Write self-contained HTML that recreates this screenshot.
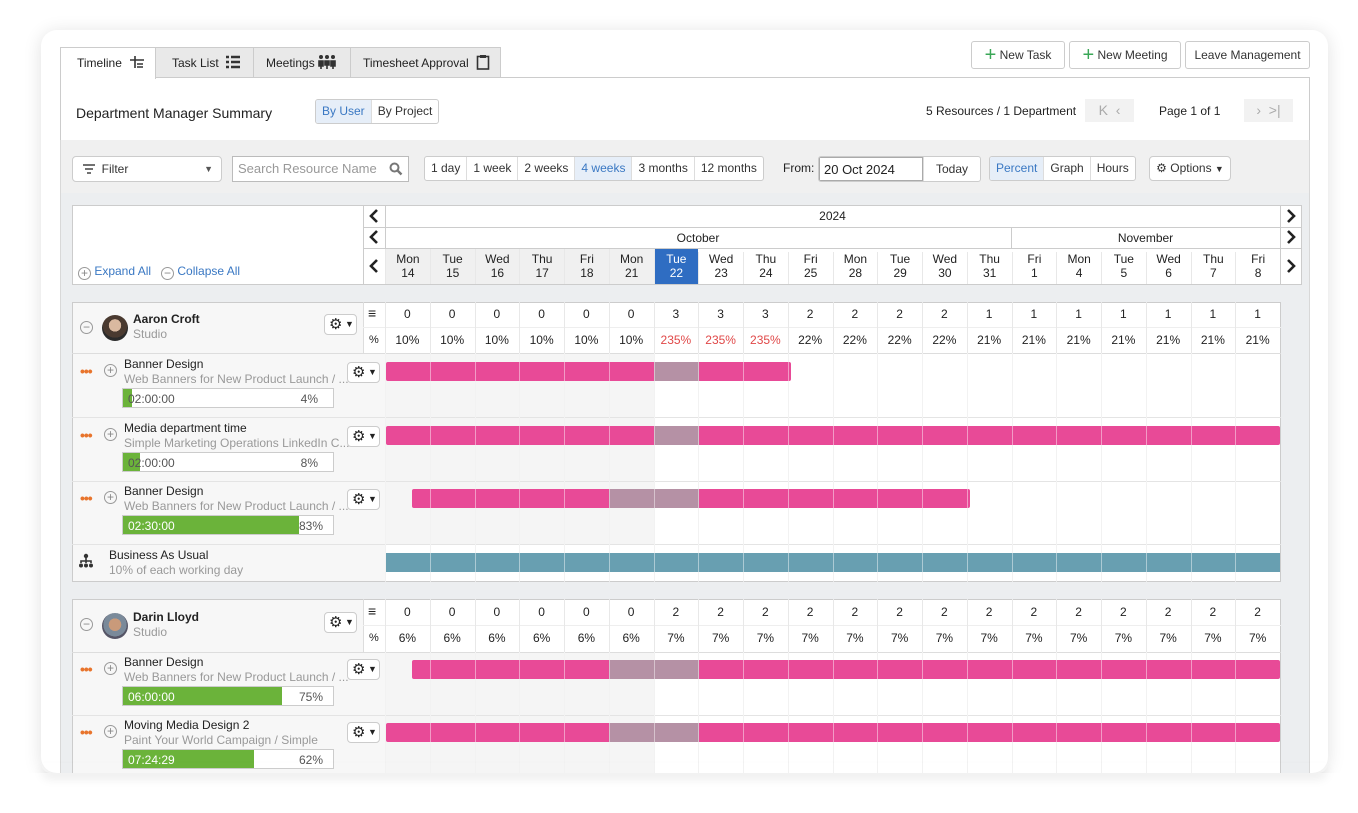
<!DOCTYPE html>
<html><head><meta charset="utf-8"><style>
*{box-sizing:border-box;margin:0;padding:0}
body{width:1358px;height:813px;background:#fff;font-family:"Liberation Sans",Arial,sans-serif;font-size:12px;color:#222;position:relative;overflow:hidden}
.a{position:absolute}
.card{left:41px;top:30px;width:1287px;height:743px;background:#fff;border-radius:16px;box-shadow:0 2px 18px rgba(0,0,0,.12);overflow:hidden}
.tab{top:47px;height:31px;background:#e9e9e9;border:1px solid #ccc;border-bottom:none;font-size:12px;line-height:30px;padding-left:16px}
.btn{border:1px solid #ccc;border-radius:3px;background:#fff;font-size:12px;text-align:center;color:#333}
.seg{display:flex;border:1px solid #ccc;border-radius:3px;background:#fff;overflow:hidden}
.seg div{border-left:1px solid #ddd;padding:0 6px;line-height:23px;font-size:12px;color:#333}
.seg div:first-child{border-left:none}
.seg .on{background:#e6eef8;color:#3a78c3}
.row{position:absolute;left:385px;width:895px;display:flex}
.row div{width:44.75px;flex:none;border-left:1px solid #e8e8e8;text-align:center}
.blue{color:#3a78c3}
.gear{border:1px solid #ccc;border-radius:4px;background:#fff;width:33px;height:21px}
.pk{background:#e84a97;height:19px;border-radius:2px}
.gy{background:#b591a5;height:19px}
.sub{color:#999;font-size:12px}
.dots{color:#e8742c;font-size:14px;letter-spacing:-1px;font-weight:bold}
.circ{width:13px;height:13px;border:1px solid #999;border-radius:50%;font-size:12px;line-height:10px;text-align:center;color:#888}
.prog{border:1px solid #ccc;background:#fff;height:20px;width:212px}
.prog .f{position:absolute;left:0;top:0;bottom:0;background:#6bb33a}
.chev{position:absolute}
</style></head><body>
<div class="a card"></div>

<div class="a tab" style="left:60px;width:96px;background:#fff;z-index:2;height:32px">Timeline <svg width="16" height="14" style="vertical-align:-2px;margin-left:4px"><path d="M6 1v12M1 5h14M8 9h6M8 12h6" stroke="#333" stroke-width="1.6" fill="none"/></svg></div>
<div class="a tab" style="left:155px;width:99px">Task List <svg width="16" height="14" style="vertical-align:-2px;margin-left:3px"><path d="M1 2h3M6 2h9M1 7h3M6 7h9M1 12h3M6 12h9" stroke="#333" stroke-width="2.4" fill="none"/></svg></div>
<div class="a tab" style="left:253px;width:98px;padding-left:12px">Meetings <svg width="18" height="16" style="vertical-align:-3px"><circle cx="3" cy="3" r="2" fill="#333"/><circle cx="9" cy="3" r="2" fill="#333"/><circle cx="15" cy="3" r="2" fill="#333"/><path d="M1 7h4v5h-4zM7 7h4v4h-4zM13 7h4v5h-4zM3 12v3M9 11v4M15 12v3" stroke="#333" stroke-width="1.6" fill="#333"/></svg></div>
<div class="a tab" style="left:350px;width:151px;padding-left:12px">Timesheet Approval <svg width="14" height="16" style="vertical-align:-3px;margin-left:4px"><rect x="1.5" y="2.5" width="11" height="12.5" fill="none" stroke="#333" stroke-width="1.6"/><rect x="4" y="1" width="6" height="3" fill="#333"/></svg></div>

<div class="a btn" style="left:971px;top:41px;width:94px;height:28px;line-height:26px"><span style="color:#3aa757;font-size:20px;vertical-align:-2px">+</span> New Task</div>
<div class="a btn" style="left:1069px;top:41px;width:112px;height:28px;line-height:26px"><span style="color:#3aa757;font-size:20px;vertical-align:-2px">+</span> New Meeting</div>
<div class="a btn" style="left:1185px;top:41px;width:125px;height:28px;line-height:26px">Leave Management</div>

<div class="a" style="left:60px;top:77px;width:1250px;height:64px;border:1px solid #ccc;background:#fff"></div>
<div class="a" style="left:76px;top:105px;font-size:14px">Department Manager Summary</div>
<div class="a seg" style="left:315px;top:99px;height:25px"><div class="on">By User</div><div>By Project</div></div>
<div class="a" style="left:926px;top:104px;font-size:12px">5 Resources / 1 Department</div>
<div class="a" style="left:1085px;top:99px;width:49px;height:23px;background:#f2f2f2;color:#aaa;font-size:14px;line-height:22px;text-align:center">K&nbsp;&nbsp;‹</div>
<div class="a" style="left:1159px;top:104px">Page 1 of 1</div>
<div class="a" style="left:1244px;top:99px;width:49px;height:23px;background:#f2f2f2;color:#aaa;font-size:14px;line-height:22px;text-align:center">›&nbsp;&nbsp;&gt;|</div>

<div class="a" style="left:60px;top:140px;width:1250px;height:54px;background:#f0f0f0;border:1px solid #d8d8d8;border-top:none"></div>
<div class="a btn" style="left:72px;top:156px;width:150px;height:26px;text-align:left;line-height:24px;padding-left:10px;border-radius:4px"><svg width="12" height="10" style="vertical-align:-1px"><path d="M0 1h12M2 5h8M4 9h4" stroke="#444" stroke-width="1.4"/></svg>&nbsp;&nbsp;Filter<span class="a" style="right:8px;top:0;font-size:9px;color:#555">▼</span></div>
<div class="a" style="left:232px;top:156px;width:177px;height:26px;background:#fff;border:1px solid #bbb;color:#999;font-size:13px;line-height:24px;padding-left:5px">Search Resource Name<svg class="a" style="right:5px;top:5px" width="14" height="14"><circle cx="5.5" cy="5.5" r="4" fill="none" stroke="#777" stroke-width="2"/><path d="M8.5 8.5l4 4" stroke="#777" stroke-width="2.4"/></svg></div>
<div class="a seg" style="left:424px;top:156px;height:25px"><div>1 day</div><div>1 week</div><div>2 weeks</div><div class="on">4 weeks</div><div>3 months</div><div>12 months</div></div>
<div class="a" style="left:783px;top:161px">From:</div>
<div class="a seg" style="left:818px;top:156px;height:26px"><div style="width:104px;border:1px solid #aaa;color:#222;font-size:13px;padding-left:4px;line-height:24px">20 Oct 2024</div><div class="blue" style="padding:0 12px;line-height:24px">Today</div></div>
<div class="a seg" style="left:989px;top:156px;height:25px"><div class="on">Percent</div><div>Graph</div><div>Hours</div></div>
<div class="a btn" style="left:1149px;top:156px;width:82px;height:25px;line-height:23px;border-radius:4px">⚙ Options <span style="font-size:9px">▼</span></div>

<div class="a" style="left:60px;top:193px;width:1250px;height:580px;background:#eceef0;border-left:1px solid #d8d8d8;border-right:1px solid #d8d8d8"></div>

<div class="a" style="left:72px;top:205px;width:1230px;height:80px;background:#fff;border:1px solid #ccc"></div>
<div class="a" style="left:363px;top:205px;width:1px;height:80px;background:#ccc"></div>
<div class="a" style="left:385px;top:205px;width:1px;height:80px;background:#ccc"></div>
<div class="a" style="left:1280px;top:205px;width:1px;height:80px;background:#ccc"></div>
<div class="a" style="left:385px;top:227px;width:917px;height:1px;background:#ccc"></div>
<div class="a" style="left:363px;top:227px;width:22px;height:1px;background:#ccc"></div>
<div class="a" style="left:363px;top:248px;width:939px;height:1px;background:#ccc"></div>
<div class="a" style="left:385px;top:209px;width:895px;text-align:center">2024</div>
<div class="a" style="left:385px;top:231px;width:626px;text-align:center">October</div>
<div class="a" style="left:1011px;top:227px;width:1px;height:21px;background:#ccc"></div>
<div class="a" style="left:1011px;top:231px;width:269px;text-align:center">November</div>
<svg class="chev" style="left:368px;top:208px" width="12" height="16"><path d="M9 2L3 8l6 6" stroke="#222" stroke-width="2.6" fill="none"/></svg>
<svg class="chev" style="left:368px;top:229px" width="12" height="16"><path d="M9 2L3 8l6 6" stroke="#222" stroke-width="2.6" fill="none"/></svg>
<svg class="chev" style="left:368px;top:258px" width="12" height="16"><path d="M9 2L3 8l6 6" stroke="#222" stroke-width="2.6" fill="none"/></svg>
<svg class="chev" style="left:1285px;top:208px" width="12" height="16"><path d="M3 2l6 6-6 6" stroke="#222" stroke-width="2.6" fill="none"/></svg>
<svg class="chev" style="left:1285px;top:229px" width="12" height="16"><path d="M3 2l6 6-6 6" stroke="#222" stroke-width="2.6" fill="none"/></svg>
<svg class="chev" style="left:1285px;top:258px" width="12" height="16"><path d="M3 2l6 6-6 6" stroke="#222" stroke-width="2.6" fill="none"/></svg>
<div class="row" style="top:249px;height:35px;line-height:14px;padding-top:3px;font-size:12px">
<div style="background:#f0f0f0;margin-top:-3px;padding-top:3px">Mon<br>14</div><div style="background:#f0f0f0;margin-top:-3px;padding-top:3px">Tue<br>15</div><div style="background:#f0f0f0;margin-top:-3px;padding-top:3px">Wed<br>16</div><div style="background:#f0f0f0;margin-top:-3px;padding-top:3px">Thu<br>17</div><div style="background:#f0f0f0;margin-top:-3px;padding-top:3px">Fri<br>18</div><div style="background:#f0f0f0;margin-top:-3px;padding-top:3px">Mon<br>21</div><div style="background:#2f6dc2;color:#fff;margin-top:-3px;padding-top:3px">Tue<br>22</div><div>Wed<br>23</div><div>Thu<br>24</div><div>Fri<br>25</div><div>Mon<br>28</div><div>Tue<br>29</div><div>Wed<br>30</div><div>Thu<br>31</div><div>Fri<br>1</div><div>Mon<br>4</div><div>Tue<br>5</div><div>Wed<br>6</div><div>Thu<br>7</div><div>Fri<br>8</div></div>
<div class="a" style="left:78px;top:264px;color:#3a78c3"><span class="circ" style="display:inline-block;vertical-align:-2px">+</span> Expand All &nbsp; <span class="circ" style="display:inline-block;vertical-align:-2px">−</span> Collapse All</div>

<div class="a" style="left:72px;top:302px;width:1209px;height:280px;background:#fff;border:1px solid #ccc"></div>
<div class="a" style="left:385px;top:353px;width:269px;height:191px;background:#f5f5f5"></div>
<div class="a" style="left:73px;top:303px;width:290px;height:50px;background:#f7f7f7"></div>
<div class="a" style="left:73px;top:353px;width:312px;height:228px;background:#f7f7f7"></div>
<div class="a" style="left:363px;top:302px;width:1px;height:52px;background:#ddd"></div>
<div class="a" style="left:385px;top:302px;width:1px;height:280px;background:#ddd"></div>
<div class="a" style="left:363px;top:327px;width:918px;height:1px;background:#eee"></div>
<div class="a" style="left:72px;top:353px;width:1209px;height:1px;background:#ddd"></div>
<div class="a" style="left:72px;top:417px;width:1209px;height:1px;background:#e4e4e4"></div>
<div class="a" style="left:72px;top:481px;width:1209px;height:1px;background:#e4e4e4"></div>
<div class="a" style="left:72px;top:544px;width:1209px;height:1px;background:#e4e4e4"></div>
<div class="row" style="top:302px;height:280px"><div></div><div></div><div></div><div></div><div></div><div></div><div></div><div></div><div></div><div></div><div></div><div></div><div></div><div></div><div></div><div></div><div></div><div></div><div></div><div></div></div>
<div class="row" style="top:307px;font-size:12px"><div style="border:none">0</div><div style="border:none">0</div><div style="border:none">0</div><div style="border:none">0</div><div style="border:none">0</div><div style="border:none">0</div><div style="border:none">3</div><div style="border:none">3</div><div style="border:none">3</div><div style="border:none">2</div><div style="border:none">2</div><div style="border:none">2</div><div style="border:none">2</div><div style="border:none">1</div><div style="border:none">1</div><div style="border:none">1</div><div style="border:none">1</div><div style="border:none">1</div><div style="border:none">1</div><div style="border:none">1</div></div>
<div class="row" style="top:333px;font-size:12px"><div style="border:none">10%</div><div style="border:none">10%</div><div style="border:none">10%</div><div style="border:none">10%</div><div style="border:none">10%</div><div style="border:none">10%</div><div style="border:none;color:#e04848">235%</div><div style="border:none;color:#e04848">235%</div><div style="border:none;color:#e04848">235%</div><div style="border:none">22%</div><div style="border:none">22%</div><div style="border:none">22%</div><div style="border:none">22%</div><div style="border:none">21%</div><div style="border:none">21%</div><div style="border:none">21%</div><div style="border:none">21%</div><div style="border:none">21%</div><div style="border:none">21%</div><div style="border:none">21%</div></div>
<div class="a" style="left:368px;top:305px;font-size:14px;font-weight:bold">≡</div>
<div class="a" style="left:369px;top:334px;font-size:11px">%</div>
<div class="a circ" style="left:80px;top:321px">−</div>
<div class="a" style="left:102px;top:315px;width:26px;height:26px;border-radius:50%;background:radial-gradient(circle at 50% 40%,#d9b9a0 0 30%,#4a3a30 31% 60%,#2a2a2a 61%)"></div>
<div class="a" style="left:133px;top:312px;font-weight:bold;font-size:12px">Aaron Croft</div>
<div class="a sub" style="left:133px;top:327px">Studio</div>
<div class="a gear" style="left:324px;top:314px;font-size:15px;line-height:19px;padding-left:4px">⚙<span style="font-size:9px;vertical-align:2px"> ▼</span></div>

<div class="a dots" style="left:80px;top:363px">•••</div><div class="a circ" style="left:104px;top:364px">+</div>
<div class="a" style="left:124px;top:357px">Banner Design</div><div class="a sub" style="left:124px;top:372px">Web Banners for New Product Launch / ...</div>
<div class="a gear" style="left:347px;top:362px;font-size:15px;line-height:19px;padding-left:4px">⚙<span style="font-size:9px;vertical-align:2px"> ▼</span></div>
<div class="a prog" style="left:122px;top:388px"><div class="f" style="width:9px"></div><span class="a" style="left:5px;top:3px;color:#555">02:00:00</span><span class="a" style="right:15px;top:3px;color:#555">4%</span></div>

<div class="a dots" style="left:80px;top:427px">•••</div><div class="a circ" style="left:104px;top:428px">+</div>
<div class="a" style="left:124px;top:421px">Media department time</div><div class="a sub" style="left:124px;top:436px">Simple Marketing Operations LinkedIn C...</div>
<div class="a gear" style="left:347px;top:426px;font-size:15px;line-height:19px;padding-left:4px">⚙<span style="font-size:9px;vertical-align:2px"> ▼</span></div>
<div class="a prog" style="left:122px;top:452px"><div class="f" style="width:17px"></div><span class="a" style="left:5px;top:3px;color:#555">02:00:00</span><span class="a" style="right:15px;top:3px;color:#555">8%</span></div>

<div class="a dots" style="left:80px;top:490px">•••</div><div class="a circ" style="left:104px;top:491px">+</div>
<div class="a" style="left:124px;top:484px">Banner Design</div><div class="a sub" style="left:124px;top:499px">Web Banners for New Product Launch / ...</div>
<div class="a gear" style="left:347px;top:489px;font-size:15px;line-height:19px;padding-left:4px">⚙<span style="font-size:9px;vertical-align:2px"> ▼</span></div>
<div class="a prog" style="left:122px;top:515px"><div class="f" style="width:176px"></div><span class="a" style="left:5px;top:3px;color:#fff">02:30:00</span><span class="a" style="right:10px;top:3px;color:#555">83%</span></div>

<svg class="a" style="left:78px;top:553px" width="16" height="16"><circle cx="8" cy="3" r="2.2" fill="#333"/><path d="M8 5v5M3 10v-2h10v2" stroke="#333" stroke-width="1.6" fill="none"/><circle cx="3" cy="12.5" r="2" fill="#333"/><circle cx="8" cy="12.5" r="2" fill="#333"/><circle cx="13" cy="12.5" r="2" fill="#333"/></svg>
<div class="a" style="left:109px;top:548px">Business As Usual</div><div class="a sub" style="left:109px;top:563px">10% of each working day</div>

<div class="a pk" style="left:386px;top:362px;width:405px"></div>
<div class="a gy" style="left:654px;top:362px;width:45px"></div>
<div class="a pk" style="left:386px;top:426px;width:894px"></div>
<div class="a gy" style="left:654px;top:426px;width:45px"></div>
<div class="a pk" style="left:412px;top:489px;width:558px"></div>
<div class="a gy" style="left:609px;top:489px;width:90px"></div>
<div class="a" style="left:386px;top:553px;width:894px;height:19px;background:#689fb1"></div>
<div class="row" style="top:353px;height:228px;pointer-events:none"><div style="border-color:rgba(255,255,255,.45)"></div><div style="border-color:rgba(255,255,255,.45)"></div><div style="border-color:rgba(255,255,255,.45)"></div><div style="border-color:rgba(255,255,255,.45)"></div><div style="border-color:rgba(255,255,255,.45)"></div><div style="border-color:rgba(255,255,255,.45)"></div><div style="border-color:rgba(255,255,255,.45)"></div><div style="border-color:rgba(255,255,255,.45)"></div><div style="border-color:rgba(255,255,255,.45)"></div><div style="border-color:rgba(255,255,255,.45)"></div><div style="border-color:rgba(255,255,255,.45)"></div><div style="border-color:rgba(255,255,255,.45)"></div><div style="border-color:rgba(255,255,255,.45)"></div><div style="border-color:rgba(255,255,255,.45)"></div><div style="border-color:rgba(255,255,255,.45)"></div><div style="border-color:rgba(255,255,255,.45)"></div><div style="border-color:rgba(255,255,255,.45)"></div><div style="border-color:rgba(255,255,255,.45)"></div><div style="border-color:rgba(255,255,255,.45)"></div><div style="border-color:rgba(255,255,255,.45)"></div></div>

<div class="a" style="left:72px;top:599px;width:1209px;height:180px;background:#fff;border:1px solid #ccc"></div>
<div class="a" style="left:385px;top:652px;width:269px;height:121px;background:#f5f5f5"></div>
<div class="a" style="left:73px;top:600px;width:290px;height:52px;background:#f7f7f7"></div>
<div class="a" style="left:73px;top:652px;width:312px;height:121px;background:#f7f7f7"></div>
<div class="a" style="left:363px;top:599px;width:1px;height:53px;background:#ddd"></div>
<div class="a" style="left:385px;top:599px;width:1px;height:174px;background:#ddd"></div>
<div class="a" style="left:363px;top:625px;width:918px;height:1px;background:#eee"></div>
<div class="a" style="left:72px;top:652px;width:1209px;height:1px;background:#ddd"></div>
<div class="a" style="left:72px;top:715px;width:1209px;height:1px;background:#e4e4e4"></div>
<div class="row" style="top:599px;height:174px"><div></div><div></div><div></div><div></div><div></div><div></div><div></div><div></div><div></div><div></div><div></div><div></div><div></div><div></div><div></div><div></div><div></div><div></div><div></div><div></div></div>
<div class="row" style="top:605px"><div style="border:none">0</div><div style="border:none">0</div><div style="border:none">0</div><div style="border:none">0</div><div style="border:none">0</div><div style="border:none">0</div><div style="border:none">2</div><div style="border:none">2</div><div style="border:none">2</div><div style="border:none">2</div><div style="border:none">2</div><div style="border:none">2</div><div style="border:none">2</div><div style="border:none">2</div><div style="border:none">2</div><div style="border:none">2</div><div style="border:none">2</div><div style="border:none">2</div><div style="border:none">2</div><div style="border:none">2</div></div>
<div class="row" style="top:631px"><div style="border:none">6%</div><div style="border:none">6%</div><div style="border:none">6%</div><div style="border:none">6%</div><div style="border:none">6%</div><div style="border:none">6%</div><div style="border:none">7%</div><div style="border:none">7%</div><div style="border:none">7%</div><div style="border:none">7%</div><div style="border:none">7%</div><div style="border:none">7%</div><div style="border:none">7%</div><div style="border:none">7%</div><div style="border:none">7%</div><div style="border:none">7%</div><div style="border:none">7%</div><div style="border:none">7%</div><div style="border:none">7%</div><div style="border:none">7%</div></div>
<div class="a" style="left:368px;top:603px;font-size:14px;font-weight:bold">≡</div>
<div class="a" style="left:369px;top:632px;font-size:11px">%</div>
<div class="a circ" style="left:80px;top:618px">−</div>
<div class="a" style="left:102px;top:613px;width:26px;height:26px;border-radius:50%;background:radial-gradient(circle at 50% 45%,#c99a7a 0 32%,#7a8a9a 33% 60%,#556 61%)"></div>
<div class="a" style="left:133px;top:610px;font-weight:bold">Darin Lloyd</div>
<div class="a sub" style="left:133px;top:625px">Studio</div>
<div class="a gear" style="left:324px;top:612px;font-size:15px;line-height:19px;padding-left:4px">⚙<span style="font-size:9px;vertical-align:2px"> ▼</span></div>

<div class="a dots" style="left:80px;top:661px">•••</div><div class="a circ" style="left:104px;top:662px">+</div>
<div class="a" style="left:124px;top:655px">Banner Design</div><div class="a sub" style="left:124px;top:670px">Web Banners for New Product Launch / ...</div>
<div class="a gear" style="left:347px;top:659px;font-size:15px;line-height:19px;padding-left:4px">⚙<span style="font-size:9px;vertical-align:2px"> ▼</span></div>
<div class="a prog" style="left:122px;top:686px"><div class="f" style="width:159px"></div><span class="a" style="left:5px;top:3px;color:#fff">06:00:00</span><span class="a" style="right:10px;top:3px;color:#555">75%</span></div>

<div class="a dots" style="left:80px;top:724px">•••</div><div class="a circ" style="left:104px;top:725px">+</div>
<div class="a" style="left:124px;top:718px">Moving Media Design 2</div><div class="a sub" style="left:124px;top:733px">Paint Your World Campaign / Simple</div>
<div class="a gear" style="left:347px;top:722px;font-size:15px;line-height:19px;padding-left:4px">⚙<span style="font-size:9px;vertical-align:2px"> ▼</span></div>
<div class="a prog" style="left:122px;top:749px"><div class="f" style="width:131px"></div><span class="a" style="left:5px;top:3px;color:#fff">07:24:29</span><span class="a" style="right:10px;top:3px;color:#555">62%</span></div>

<div class="a pk" style="left:412px;top:660px;width:868px"></div>
<div class="a gy" style="left:609px;top:660px;width:90px"></div>
<div class="a pk" style="left:386px;top:723px;width:894px"></div>
<div class="a gy" style="left:609px;top:723px;width:90px"></div>
<div class="row" style="top:652px;height:121px"><div style="border-color:rgba(255,255,255,.45)"></div><div style="border-color:rgba(255,255,255,.45)"></div><div style="border-color:rgba(255,255,255,.45)"></div><div style="border-color:rgba(255,255,255,.45)"></div><div style="border-color:rgba(255,255,255,.45)"></div><div style="border-color:rgba(255,255,255,.45)"></div><div style="border-color:rgba(255,255,255,.45)"></div><div style="border-color:rgba(255,255,255,.45)"></div><div style="border-color:rgba(255,255,255,.45)"></div><div style="border-color:rgba(255,255,255,.45)"></div><div style="border-color:rgba(255,255,255,.45)"></div><div style="border-color:rgba(255,255,255,.45)"></div><div style="border-color:rgba(255,255,255,.45)"></div><div style="border-color:rgba(255,255,255,.45)"></div><div style="border-color:rgba(255,255,255,.45)"></div><div style="border-color:rgba(255,255,255,.45)"></div><div style="border-color:rgba(255,255,255,.45)"></div><div style="border-color:rgba(255,255,255,.45)"></div><div style="border-color:rgba(255,255,255,.45)"></div><div style="border-color:rgba(255,255,255,.45)"></div></div>

<div class="a" style="left:0;top:773px;width:1358px;height:40px;background:#fff"></div>
<div class="a" style="left:41px;top:763px;width:1287px;height:10px;border-radius:0 0 16px 16px;box-shadow:0 6px 10px rgba(0,0,0,.08)"></div>
</body></html>
